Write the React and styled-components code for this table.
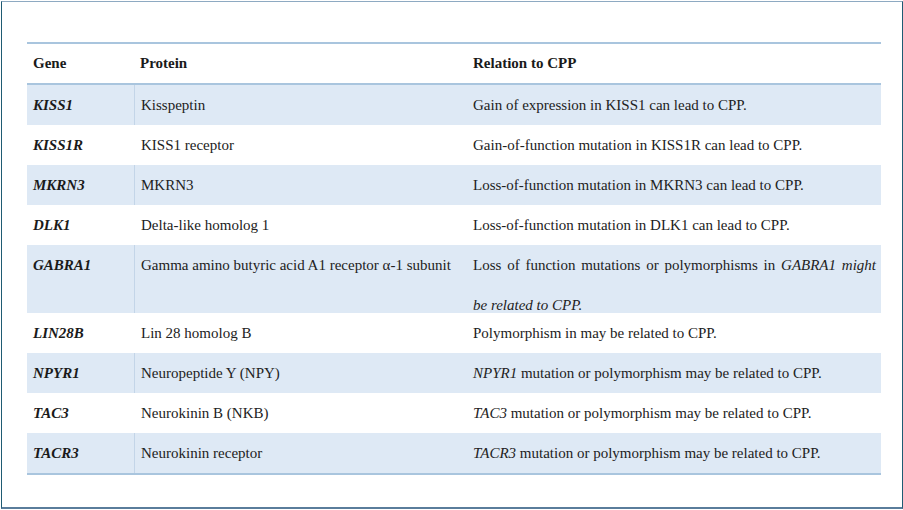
import React from "react";
import styled, { createGlobalStyle } from "styled-components";

const serif = `"Liberation Serif", Tinos, "Times New Roman", Times, "DejaVu Serif", serif`;

const GlobalStyle = createGlobalStyle`
  html, body {
    margin: 0;
    padding: 0;
    background: #ffffff;
  }
  body {
    font-family: ${serif};
    color: #222;
  }
`;

const rows = [
  { gene: "KISS1", protein: "Kisspeptin", relation: <>Gain of expression in KISS1 can lead to CPP.</> },
  { gene: "KISS1R", protein: "KISS1 receptor", relation: <>Gain-of-function mutation in KISS1R can lead to CPP.</> },
  { gene: "MKRN3", protein: "MKRN3", relation: <>Loss-of-function mutation in MKRN3 can lead to CPP.</> },
  { gene: "DLK1", protein: "Delta-like homolog 1", relation: <>Loss-of-function mutation in DLK1 can lead to CPP.</> },
  {
    gene: "GABRA1",
    protein: "Gamma amino butyric acid A1 receptor α-1 subunit",
    relation: (
      <>
        Loss of function mutations or polymorphisms in <em>GABRA1 might be related to CPP.</em>
      </>
    ),
    tall: true,
  },
  { gene: "LIN28B", protein: "Lin 28 homolog B", relation: <>Polymorphism in may be related to CPP.</> },
  { gene: "NPYR1", protein: "Neuropeptide Y (NPY)", relation: <><em>NPYR1</em> mutation or polymorphism may be related to CPP.</> },
  { gene: "TAC3", protein: "Neurokinin B (NKB)", relation: <><em>TAC3</em> mutation or polymorphism may be related to CPP.</> },
  { gene: "TACR3", protein: "Neurokinin receptor", relation: <><em>TACR3</em> mutation or polymorphism may be related to CPP.</> },
];

const App = () => {
  return (
    <>
      <GlobalStyle />
      <Frame>
        <Table>
          <HeadRow>
            <HeadCell>Gene</HeadCell>
            <HeadCell>Protein</HeadCell>
            <HeadCell>Relation to CPP</HeadCell>
          </HeadRow>
          {rows.map((r, i) => (
            <Row key={r.gene} $shaded={i % 2 === 0} $tall={r.tall}>
              <GeneCell>{r.gene}</GeneCell>
              <ProteinCell $shaded={i % 2 === 0} $tall={r.tall}>
                {r.protein}
              </ProteinCell>
              <RelationCell>{r.relation}</RelationCell>
            </Row>
          ))}
        </Table>
      </Frame>
    </>
  );
};

export default App;

const Frame = styled.div`
  box-sizing: border-box;
  margin: 1px 0 0 1px;
  width: 902px;
  height: 508px;
  border-top: 1px solid #8eaac2;
  border-bottom: 2px solid #5a7d9b;
  border-left: 1px solid #1f5b73;
  border-right: 1px solid #1f5b73;
  padding: 40px 20px 0 25px;
`;

const Table = styled.div`
  width: 854px;
  border-top: 2px solid #a9c5de;
  border-bottom: 2px solid #a9c5de;
  font-family: ${serif};
  font-size: 15px;
`;

const cols = `107px 333px 1fr`;

const HeadRow = styled.div`
  display: grid;
  grid-template-columns: ${cols};
  height: 39px;
  align-items: center;
  border-bottom: 2px solid #a9c5de;
`;

const HeadCell = styled.div`
  font-weight: bold;
  padding-left: 6px;
  color: #1a1a1a;
`;

const Row = styled.div`
  display: grid;
  grid-template-columns: ${cols};
  height: ${(p) => (p.$tall ? "68px" : "40px")};
  align-items: ${(p) => (p.$tall ? "start" : "center")};
  line-height: ${(p) => (p.$tall ? "40px" : "normal")};
  background: ${(p) => (p.$shaded ? "#dee9f5" : "#ffffff")};
`;

const GeneCell = styled.div`
  font-weight: bold;
  font-style: italic;
  padding-left: 6px;
  color: #1a1a1a;
`;

const ProteinCell = styled.div`
  padding-left: 6px;
  align-self: stretch;
  display: flex;
  align-items: ${(p) => (p.$tall ? "flex-start" : "center")};
  border-left: 1px solid ${(p) => (p.$shaded ? "#c3d5e8" : "#ffffff")};
`;

const RelationCell = styled.div`
  padding: 0 5px 0 6px;
  text-align: justify;
`;
